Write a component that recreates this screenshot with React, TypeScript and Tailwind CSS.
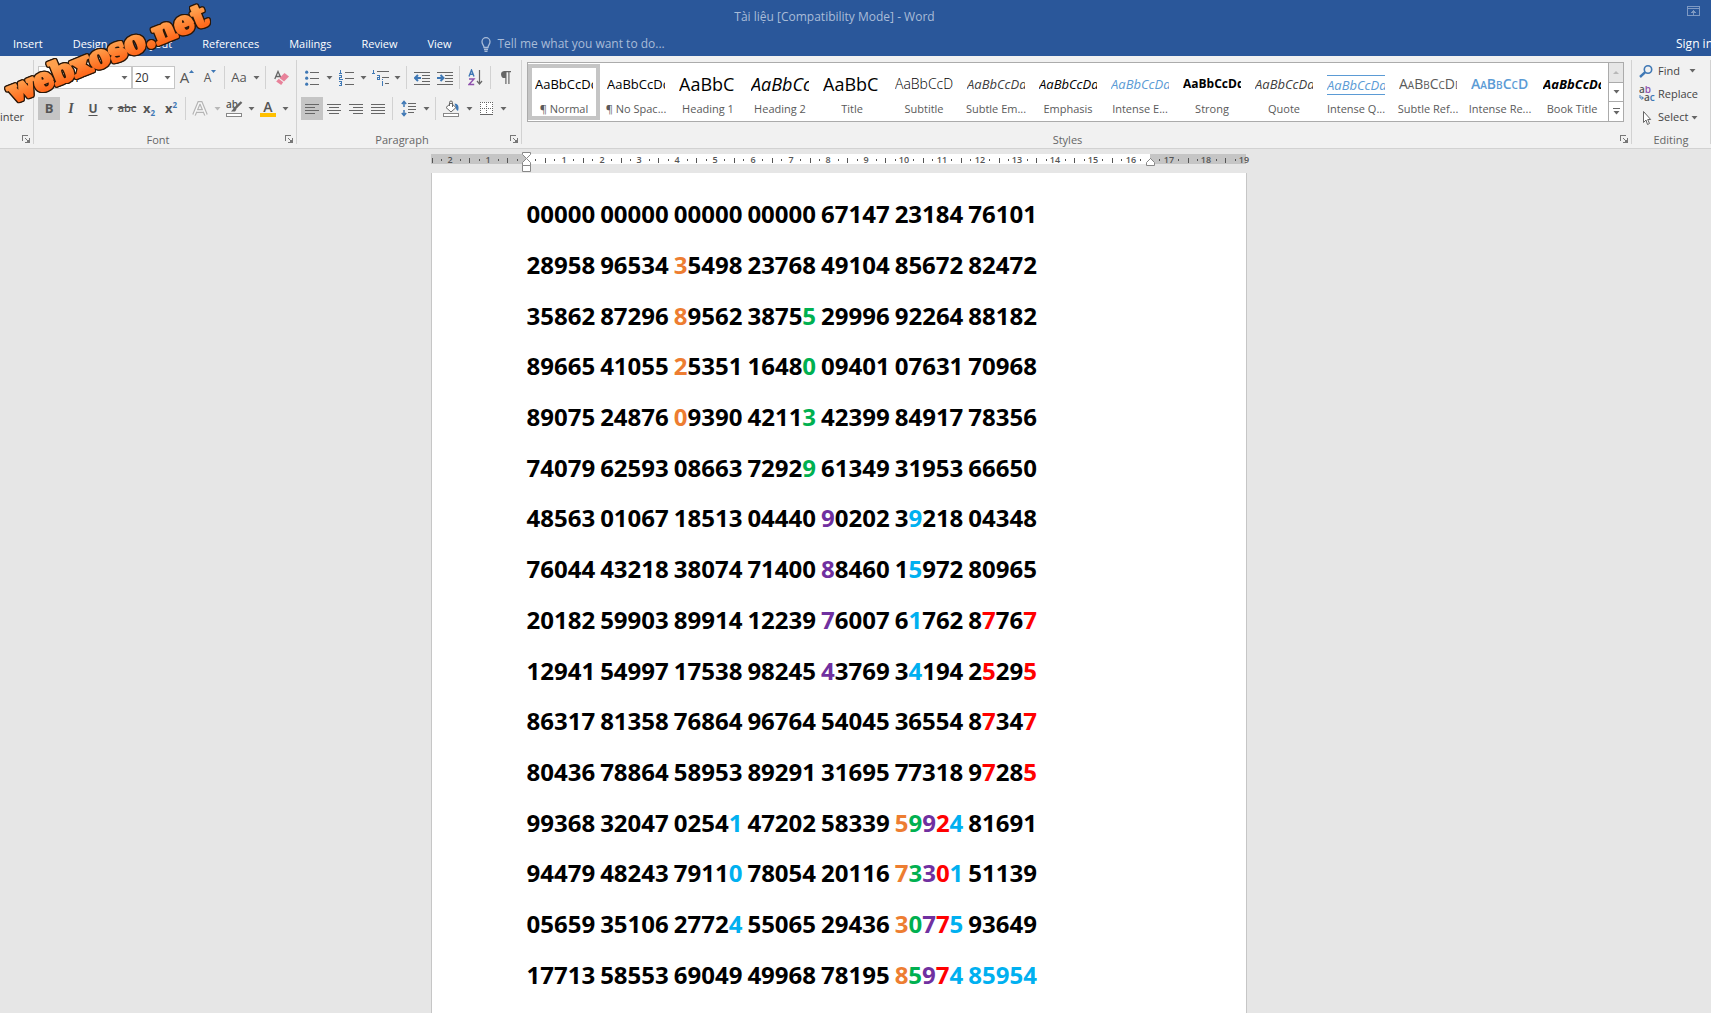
import type { ReactNode } from 'react';
import clsx from 'clsx';

const TABS = ['Insert', 'Design', 'Layout', 'References', 'Mailings', 'Review', 'View'];

interface StyleItem {
  name: string;
  sample: string;
  className: string;
}

const STYLES: StyleItem[] = [
  { name: '¶ Normal', sample: 'AaBbCcDd', className: 'text-[13px] text-black' },
  { name: '¶ No Spac...', sample: 'AaBbCcDd', className: 'text-[13px] text-black' },
  { name: 'Heading 1', sample: 'AaBbC', className: 'text-lg text-black' },
  { name: 'Heading 2', sample: 'AaBbCc', className: 'text-lg italic text-black' },
  { name: 'Title', sample: 'AaBbC', className: 'text-lg text-black' },
  { name: 'Subtitle', sample: 'AaBbCcD', className: 'text-sm font-light text-black' },
  { name: 'Subtle Em...', sample: 'AaBbCcDd', className: 'text-[13px] italic text-[#404040]' },
  { name: 'Emphasis', sample: 'AaBbCcDd', className: 'text-[13px] italic text-black' },
  { name: 'Intense E...', sample: 'AaBbCcDd', className: 'text-[13px] italic text-[#5b9bd5]' },
  { name: 'Strong', sample: 'AaBbCcDd', className: 'text-xs font-bold text-black' },
  { name: 'Quote', sample: 'AaBbCcDd', className: 'text-[13px] italic text-[#404040]' },
  {
    name: 'Intense Q...',
    sample: 'AaBbCcDd',
    className: 'text-[13px] italic text-[#5b9bd5] border-y border-[#5b9bd5]',
  },
  { name: 'Subtle Ref...', sample: 'AaBbCcDd', className: 'text-sm text-[#5a5a5a] [font-variant-caps:small-caps]' },
  {
    name: 'Intense Re...',
    sample: 'AaBbCcDd',
    className: 'text-sm font-semibold text-[#5b9bd5] [font-variant-caps:small-caps]',
  },
  { name: 'Book Title', sample: 'AaBbCcDd', className: 'text-[13px] font-bold italic text-black' },
];

/** Digit colours: k = black, o = orange, g = green, p = purple, b = blue, r = red */
const COLORS: Record<string, string> = {
  k: 'text-black',
  o: 'text-[#ed7d31]',
  g: 'text-[#00b050]',
  p: 'text-[#7030a0]',
  b: 'text-[#00b0f0]',
  r: 'text-[#ff0000]',
};

/** Each line of digits, with a colour mask per group where it is not all black */
const LINES: { text: string; marks?: Record<number, string> }[] = [
  { text: '00000 00000 00000 00000 67147 23184 76101' },
  { text: '28958 96534 35498 23768 49104 85672 82472', marks: { 2: 'okkkk' } },
  { text: '35862 87296 89562 38755 29996 92264 88182', marks: { 2: 'okkkk', 3: 'kkkkg' } },
  { text: '89665 41055 25351 16480 09401 07631 70968', marks: { 2: 'okkkk', 3: 'kkkkg' } },
  { text: '89075 24876 09390 42113 42399 84917 78356', marks: { 2: 'okkkk', 3: 'kkkkg' } },
  { text: '74079 62593 08663 72929 61349 31953 66650', marks: { 3: 'kkkkg' } },
  { text: '48563 01067 18513 04440 90202 39218 04348', marks: { 4: 'pkkkk', 5: 'kbkkk' } },
  { text: '76044 43218 38074 71400 88460 15972 80965', marks: { 4: 'pkkkk', 5: 'kbkkk' } },
  { text: '20182 59903 89914 12239 76007 61762 87767', marks: { 4: 'pkkkk', 5: 'kbkkk', 6: 'krkkr' } },
  { text: '12941 54997 17538 98245 43769 34194 25295', marks: { 4: 'pkkkk', 5: 'kbkkk', 6: 'krkkr' } },
  { text: '86317 81358 76864 96764 54045 36554 87347', marks: { 6: 'krkkr' } },
  { text: '80436 78864 58953 89291 31695 77318 97285', marks: { 6: 'krkkr' } },
  { text: '99368 32047 02541 47202 58339 59924 81691', marks: { 2: 'kkkkb', 5: 'ogprb' } },
  { text: '94479 48243 79110 78054 20116 73301 51139', marks: { 2: 'kkkkb', 5: 'ogprb' } },
  { text: '05659 35106 27724 55065 29436 30775 93649', marks: { 2: 'kkkkb', 5: 'ogprb' } },
  { text: '17713 58553 69049 49968 78195 85974 85954', marks: { 5: 'ogprb', 6: 'bbbbb' } },
];

function Caret({ light = false }: { light?: boolean }) {
  return (
    <svg width="7" height="4" viewBox="0 0 7 4" fill={light ? '#b8b8b8' : '#666666'} aria-hidden="true">
      <path d="M0.5 0h6L3.5 3.5z" />
    </svg>
  );
}

interface ToolProps {
  label: string;
  active?: boolean;
  wide?: boolean;
  children: ReactNode;
}

function Tool({ label, active = false, wide = false, children }: ToolProps) {
  return (
    <button
      type="button"
      aria-label={label}
      aria-pressed={active}
      className={clsx(
        'flex h-[23px] shrink-0 items-center justify-center text-[#555555]',
        wide ? 'w-6' : 'w-[22px]',
        active && 'bg-[#c5c5c5]'
      )}
    >
      {children}
    </button>
  );
}

function Drop({ label, light }: { label: string; light?: boolean }) {
  return (
    <button type="button" aria-label={label} className="flex h-[23px] w-3 shrink-0 items-center justify-center">
      <Caret light={light} />
    </button>
  );
}

function Sep() {
  return <span className="mx-[3px] h-[23px] w-px shrink-0 bg-[#d2d2d2]" />;
}

function Launcher({ label }: { label: string }) {
  return (
    <button type="button" aria-label={label} className="absolute right-[3px] bottom-px">
      <svg width="8" height="8" viewBox="0 0 8 8" fill="none" stroke="#777777" shapeRendering="crispEdges">
        <path d="M0.5 6V0.5H6M3 3l3 3" />
        <path d="M7.5 3v4.5H3M6.5 5v2M5 6.5h2" />
      </svg>
    </button>
  );
}

interface GroupProps {
  title?: string;
  className: string;
  launcher?: boolean;
  children: ReactNode;
}

function Group({ title, className, launcher = true, children }: GroupProps) {
  return (
    <section className={clsx('relative flex h-[84px] flex-col border-r border-[#d2d2d2]', className)}>
      {children}
      {title && (
        <h2
          className={clsx(
            '-mb-1 mt-auto text-center text-[11px] leading-4 text-[#666666]',
            launcher && 'pr-[18px]'
          )}
        >
          {title}
        </h2>
      )}
      {launcher && <Launcher label={`${title ?? 'Clipboard'} settings`} />}
    </section>
  );
}

/** Horizontal text lines, used by the alignment buttons */
function LinesIcon({ rows }: { rows: [number, number][] }) {
  return (
    <svg width="14" height="12" viewBox="0 0 14 12" stroke="#666666" shapeRendering="crispEdges">
      {rows.map(([from, to], i) => (
        <path key={i} d={`M${from} ${i * 3 + 1.5}H${to}`} />
      ))}
    </svg>
  );
}

function BulletsIcon() {
  return (
    <svg width="14" height="16" viewBox="0 0 14 16">
      <path d="M5 2.5h9M5 8.5h9M5 14.5h9" stroke="#666666" shapeRendering="crispEdges" />
      <g fill="#3f78b5">
        <circle cx="1.7" cy="2.2" r="1.6" />
        <circle cx="1.7" cy="8.2" r="1.6" />
        <circle cx="1.7" cy="14.2" r="1.6" />
      </g>
    </svg>
  );
}

function NumberingIcon() {
  return (
    <svg width="15" height="17" viewBox="0 0 15 17" fill="none" shapeRendering="crispEdges">
      <path d="M6 3h9M6 9h9M6 15h9" stroke="#666666" />
      <path
        d="M0.5 1.5h1v3M0 4.5h3M0 6.5h2.5v2h-2v2h3M0 12.5h2.5v4H0M0.5 14.5h2"
        stroke="#3f78b5"
      />
    </svg>
  );
}

function MultilevelIcon() {
  return (
    <svg width="17" height="17" viewBox="0 0 17 17" fill="none" shapeRendering="crispEdges">
      <path d="M5 2.5h12M10 8.5h7M13 14.5h4" stroke="#666666" />
      <path d="M0.5 1.5h1v3M0 4.5h3M5 6.5h2.5v4H5v-2h2M10.5 10v1M10.5 12.5v4M9.5 12.5h1" stroke="#3f78b5" />
    </svg>
  );
}

function IndentIcon({ increase = false }: { increase?: boolean }) {
  return (
    <svg width="16" height="14" viewBox="0 0 16 14" fill="none">
      <path d="M0 1.5h16M8 4.5h8M8 7.5h8M8 10.5h8M0 13.5h16" stroke="#666666" shapeRendering="crispEdges" />
      <path d={increase ? 'M0 7h6M3.5 4L6.5 7l-3 3' : 'M7 7H1M4 4L1 7l3 3'} stroke="#3f78b5" strokeWidth="2" />
    </svg>
  );
}

function SortIcon() {
  return (
    <svg width="15" height="17" viewBox="0 0 15 17" fill="none">
      <path d="M1 7.5L3.5 1 6 7.5M1.8 5.3h3.4" stroke="#3f78b5" strokeWidth="1.4" />
      <path d="M1 10h5L1 15.5h5.2" stroke="#8f52ad" strokeWidth="1.4" />
      <path d="M11.5 1v14M9 12l2.5 3 2.5-3" stroke="#666666" strokeWidth="1.2" />
    </svg>
  );
}

function LineSpacingIcon() {
  return (
    <svg width="15" height="17" viewBox="0 0 15 17" fill="none">
      <path d="M7 3.5h8M7 6.5h8M7 9.5h8M7 12.5h6" stroke="#666666" shapeRendering="crispEdges" />
      <path d="M3 2v5M0.8 4L3 1.5 5.2 4M3 10v5M0.8 13L3 15.5 5.2 13" stroke="#3f78b5" strokeWidth="1.5" />
    </svg>
  );
}

function ShadingIcon() {
  return (
    <svg width="17" height="17" viewBox="0 0 17 17" fill="none">
      <path d="M3 7.5L8 3l5 4.5-5 4.5z" fill="#ffffff" stroke="#666666" />
      <path d="M6.5 6V2.5a1.5 1.5 0 0 1 3 0V7" stroke="#666666" />
      <path d="M11.5 3.5c3.5 0 5 3 3.5 7.5-1.5-1-2-1.5-2-3.5z" fill="#3f78b5" />
      <rect x="0.5" y="13.5" width="15" height="3" fill="#ffffff" stroke="#888888" />
    </svg>
  );
}

function BordersIcon() {
  return (
    <svg width="13" height="13" viewBox="0 0 13 13" stroke="#666666" shapeRendering="crispEdges">
      <rect width="13" height="13" fill="#ffffff" stroke="none" />
      <path d="M0 0.5h13M0 6.5h13M0.5 0v12M6.5 0v12M12.5 0v12" strokeDasharray="1 1" />
      <path d="M0 12.5h13" />
    </svg>
  );
}

function ClearFormatIcon() {
  return (
    <svg width="15" height="16" viewBox="0 0 15 16" fill="none">
      <path d="M0.8 9L4 1.5 7 8M2 6.5h4" stroke="#666666" strokeWidth="1.3" />
      <path d="M10.5 3l4.5 3.5-5 5-4.5-3.5z" fill="#e8829a" />
      <path d="M4.7 8.8l4.5 3.5-2 2.7-5-3.5z" fill="#e8829a" />
    </svg>
  );
}

function HighlightIcon() {
  return (
    <svg width="17" height="17" viewBox="0 0 17 17" fill="none">
      <text x="0" y="8" fontSize="10" fontWeight="600" fill="#555555" className="font-['Open_Sans',sans-serif]">
        ab
      </text>
      <path d="M15.5 2L8 9.5" stroke="#666666" strokeWidth="2.4" />
      <path d="M8.5 7.5L5 11.5h4l1.5-2z" fill="#666666" />
      <rect x="0.5" y="13.5" width="15" height="3" fill="#ffffff" stroke="#888888" />
    </svg>
  );
}

function FontTools() {
  return (
    <>
      <div className="mt-[6px] flex items-center">
        <label className="relative block h-[23px] w-[94px]">
          <select aria-label="Font" className="block h-full w-full appearance-none border border-[#c6c6c6] bg-white px-1 text-xs">
            <option>Calibri</option>
          </select>
          <span className="pointer-events-none absolute top-[10px] right-1">
            <Caret />
          </span>
        </label>
        <label className="relative block h-[23px] w-[43px]">
          <select aria-label="Font size" className="block h-full w-full appearance-none border border-[#c6c6c6] bg-white px-[2px] text-xs text-[#333333]">
            <option>20</option>
          </select>
          <span className="pointer-events-none absolute top-[10px] right-1">
            <Caret />
          </span>
        </label>
        <Tool label="Increase font size" wide>
          <span className="text-[15px]">A</span>
          <svg width="5" height="3" viewBox="0 0 5 3" className="mb-3" fill="#3f78b5">
            <path d="M2.5 0L5 3H0z" />
          </svg>
        </Tool>
        <Tool label="Decrease font size">
          <span className="text-xs">A</span>
          <svg width="5" height="3" viewBox="0 0 5 3" className="mb-3" fill="#3f78b5">
            <path d="M2.5 3L5 0H0z" />
          </svg>
        </Tool>
        <Sep />
        <Tool label="Change case">
          <span className="text-[13px]">Aa</span>
        </Tool>
        <Drop label="Change case options" />
        <Sep />
        <Tool label="Clear formatting" wide>
          <ClearFormatIcon />
        </Tool>
      </div>
      <div className="mt-2 flex items-center">
        <Tool label="Bold" active>
          <b className="text-[13px]">B</b>
        </Tool>
        <Tool label="Italic">
          <i className="font-['Liberation_Serif',serif] text-sm font-bold">I</i>
        </Tool>
        <Tool label="Underline">
          <span className="text-xs font-bold underline underline-offset-2">U</span>
        </Tool>
        <Drop label="Underline options" />
        <Tool label="Strikethrough">
          <s className="text-[11px] font-semibold">abc</s>
        </Tool>
        <Tool label="Subscript">
          <b className="text-[13px]">x</b>
          <span className="mt-2 text-[8px] font-bold text-[#3f78b5]">2</span>
        </Tool>
        <Tool label="Superscript">
          <b className="text-[13px]">x</b>
          <span className="mb-2 text-[8px] font-bold text-[#3f78b5]">2</span>
        </Tool>
        <Sep />
        <Tool label="Text effects">
          <svg width="16" height="16" viewBox="0 0 16 16" fill="none">
            <path d="M2 14L7 2h2l5 12M4.5 10h7" stroke="#b4b4b4" strokeWidth="3.8" />
            <path d="M2 14L7 2h2l5 12M4.5 10h7" stroke="#f7f7f7" strokeWidth="1.5" />
          </svg>
        </Tool>
        <Drop label="Text effects options" light />
        <Tool label="Text highlight color">
          <HighlightIcon />
        </Tool>
        <Drop label="Highlight options" />
        <Tool label="Font color">
          <span className="flex w-4 flex-col items-center border-b-4 border-[#ffc000] text-sm leading-[13px] font-semibold">A</span>
        </Tool>
        <Drop label="Font color options" />
      </div>
    </>
  );
}

function ParagraphTools() {
  return (
    <>
      <div className="mt-[6px] flex items-center">
        <Tool label="Bullets">
          <BulletsIcon />
        </Tool>
        <Drop label="Bullet options" />
        <Tool label="Numbering">
          <NumberingIcon />
        </Tool>
        <Drop label="Numbering options" />
        <Tool label="Multilevel list">
          <MultilevelIcon />
        </Tool>
        <Drop label="Multilevel options" />
        <Sep />
        <Tool label="Decrease indent" wide>
          <IndentIcon />
        </Tool>
        <Tool label="Increase indent">
          <IndentIcon increase />
        </Tool>
        <Sep />
        <Tool label="Sort" wide>
          <SortIcon />
        </Tool>
        <Sep />
        <Tool label="Show marks">
          <svg width="11" height="13" viewBox="0 0 11 13" fill="#666666">
            <path d="M4 0h7v1.2H9.5V13H8.3V1.2H6.5V13H5.3V7A3.5 3.5 0 0 1 4 0z" />
          </svg>
        </Tool>
      </div>
      <div className="mt-2 flex items-center">
        <Tool label="Align left" active>
          <LinesIcon rows={[[0, 14], [0, 10], [0, 14], [0, 10]]} />
        </Tool>
        <Tool label="Center">
          <LinesIcon rows={[[0, 14], [2, 12], [0, 14], [2, 12]]} />
        </Tool>
        <Tool label="Align right">
          <LinesIcon rows={[[0, 14], [4, 14], [0, 14], [4, 14]]} />
        </Tool>
        <Tool label="Justify">
          <LinesIcon rows={[[0, 14], [0, 14], [0, 14], [0, 14]]} />
        </Tool>
        <Sep />
        <Tool label="Line spacing" wide>
          <LineSpacingIcon />
        </Tool>
        <Drop label="Line spacing options" />
        <Sep />
        <Tool label="Shading" wide>
          <ShadingIcon />
        </Tool>
        <Drop label="Shading options" />
        <Tool label="Borders">
          <BordersIcon />
        </Tool>
        <Drop label="Border options" />
      </div>
    </>
  );
}

function StyleGallery() {
  return (
    <div className="mt-[2px] ml-[5px] mr-[7px] flex h-[60px] border border-[#ababab] bg-white">
      <ul className="flex min-w-0 flex-1">
        {STYLES.map((style, i) => (
          <li key={style.name} className="min-w-0 flex-1">
            <button
              type="button"
              aria-label={style.name}
              className={clsx(
                'mt-px flex h-[56px] w-full flex-col items-center border-4',
                i === 0 ? 'border-[#c5c5c5]' : 'border-transparent'
              )}
            >
              <span className="flex h-[33px] w-[58px] shrink-0 items-center overflow-hidden">
                <span className={clsx('h-5 w-full shrink-0 leading-[18px] text-left whitespace-nowrap', style.className)}>
                  {style.sample}
                </span>
              </span>
              <span className="text-[11px] leading-4 whitespace-nowrap text-[#5a5a5a]">{style.name}</span>
            </button>
          </li>
        ))}
      </ul>
      <div className="flex w-[15px] flex-col divide-y divide-[#ababab] border-l border-[#ababab]">
        <button type="button" aria-label="Scroll up" className="flex flex-1 items-center justify-center bg-[#e6e6e6]">
          <svg width="6" height="3" viewBox="0 0 6 3" fill="#b8b8b8">
            <path d="M0 3h6L3 0z" />
          </svg>
        </button>
        <button type="button" aria-label="Scroll down" className="flex flex-1 items-center justify-center">
          <Caret />
        </button>
        <button type="button" aria-label="More styles" className="flex flex-1 flex-col items-center justify-center gap-[2px]">
          <span className="h-px w-[7px] bg-[#666666]" />
          <Caret />
        </button>
      </div>
    </div>
  );
}

function EditingTools() {
  return (
    <div className="flex flex-col pl-[7px] text-[11px] text-[#444444]">
      <button type="button" className="flex h-[22px] items-center gap-[5px]">
        <svg width="14" height="13" viewBox="0 0 14 13" fill="none" stroke="#3f78b5">
          <circle cx="9" cy="4.5" r="3.7" strokeWidth="1.6" />
          <path d="M6.2 7.2L1 12" strokeWidth="2.4" />
        </svg>
        Find
        <span className="ml-1">
          <Caret />
        </span>
      </button>
      <button type="button" className="flex h-6 items-center gap-[3px]">
        <svg width="16" height="16" viewBox="0 0 16 16" className="font-['Open_Sans',sans-serif]" fontSize="10" fontWeight="600">
          <text x="0" y="7" fill="#555555">
            a<tspan fill="#8f52ad">b</tspan>
          </text>
          <text x="5" y="15" fill="#555555">
            a<tspan fill="#3f78b5">c</tspan>
          </text>
          <path d="M1 9v3h3M2.5 10.5L4.500 12l-2 1.5" fill="none" stroke="#3f78b5" />
        </svg>
        Replace
      </button>
      <button type="button" className="flex h-[23px] items-center gap-[5px]">
        <svg width="14" height="16" viewBox="0 0 14 16" fill="#ffffff" stroke="#666666">
          <path d="M4.5 1.5v11l2.5-2.5 1.5 4.5 2-1-1.8-4h3z" />
        </svg>
        <span className="flex items-center gap-[3px]">
          Select
          <Caret />
        </span>
      </button>
    </div>
  );
}

/** Distance between two whole numbers of the ruler, in pixels */
const UNIT = 37.8;
const ORIGIN = 95;

function Ruler() {
  const quarters = Array.from({ length: 87 }, (_, i) => i - 10);
  return (
    <svg
      width="824"
      height="21"
      viewBox="0 0 824 21"
      className="shrink-0 font-['Open_Sans',sans-serif]"
      role="img"
      aria-label="Ruler"
    >
      <rect x="0" y="2" width="815" height="10" fill="#c5c5c5" />
      <rect x="96" y="2" width="623" height="10" fill="#ffffff" />
      {quarters.map((q) => {
        const x = Math.round(ORIGIN + (q * UNIT) / 4);
        if (q === 0) return null;
        if (q % 4 === 0) {
          return (
            <text key={q} x={x} y="11" fontSize="9" fontWeight="600" fill="#555555" textAnchor="middle">
              {Math.abs(q / 4)}
            </text>
          );
        }
        return q % 2 === 0 ? (
          <rect key={q} x={x} y="6" width="1" height="5" fill="#555555" />
        ) : (
          <rect key={q} x={x} y="7" width="1" height="2" fill="#555555" />
        );
      })}
      <g fill="#ffffff" stroke="#888888">
        <path d="M91.5 0.5h8v2l-4 4-4-4z" />
        <path d="M95.5 6.5l4 4v3h-8v-3zM91.5 13.5h8v6h-8z" />
        <path d="M719.5 6.5l4 4v3h-8v-3z" />
      </g>
    </svg>
  );
}

function DigitLine({ text, marks = {} }: { text: string; marks?: Record<number, string> }) {
  return (
    <p className="flex flex-1 items-center gap-[5px]">
      {text.split(' ').map((group, g) => (
        <span key={g}>
          {marks[g]
            ? group.split('').map((digit, d) => (
                <span key={d} className={COLORS[marks[g][d]]}>
                  {digit}
                </span>
              ))
            : group}
        </span>
      ))}
    </p>
  );
}

function Watermark() {
  return (
    <svg
      width="220"
      height="116"
      viewBox="0 0 220 116"
      className="pointer-events-none absolute top-0 left-0 font-['DejaVu_Serif',serif] [filter:drop-shadow(1px_0_#2a1708)_drop-shadow(-1px_0_#2a1708)_drop-shadow(0_1px_#2a1708)_drop-shadow(0_-1px_#2a1708)]"
      role="img"
      aria-label="webxoso.net"
    >
      <defs>
        <linearGradient id="orange" x1="0" y1="0" x2="0" y2="1">
          <stop offset="0.3" stopColor="#ffa04d" />
          <stop offset="0.8" stopColor="#ff6a1c" />
        </linearGradient>
      </defs>
      <text
        x="13"
        y="103"
        transform="rotate(-22 13 103)"
        fontSize="31"
        fontWeight="bold"
        fill="url(#orange)"
        stroke="url(#orange)"
        strokeWidth="3"
        strokeLinejoin="round"
      >
        webxoso.net
      </text>
    </svg>
  );
}

export default function App() {
  return (
    <div className="relative flex min-h-screen flex-col overflow-hidden bg-[#e6e6e6] font-['Open_Sans','Noto_Sans',sans-serif]">
      <header className="bg-[#2a579a] text-xs text-white">
        <div className="relative flex h-8 items-center justify-center pt-px pr-[42px] text-[#a9bcd8]">
          <h1>Tài liệu [Compatibility Mode] - Word</h1>
          <button type="button" aria-label="Ribbon display options" className="absolute top-[6px] right-[11px]">
            <svg width="13" height="10" viewBox="0 0 13 10" fill="none" stroke="#7f9ac3" shapeRendering="crispEdges">
              <path d="M0.5 0.5h12v9H0.5zM0 2.5h13M6.5 9V4M4 6.5h5M5 5.5h3" />
            </svg>
          </button>
        </div>
        <nav className="flex h-6 items-center">
          <div className="flex gap-[30px] pl-[13px] text-[11px]">
            {TABS.map((tab) => (
              <a key={tab} href="#">
                {tab}
              </a>
            ))}
          </div>
          <label className="ml-[30px] flex flex-1 items-center gap-[6px] text-[#a9bcd8]">
            <svg width="10" height="15" viewBox="0 0 10 15" fill="none" stroke="#a9bcd8" strokeWidth="1.3">
              <path d="M3 10.5C3 8 1 7.5 1 4.7a4 4 0 0 1 8 0C9 7.5 7 8 7 10.5zM3 12.5h4M3.5 14.3h3" />
            </svg>
            <input
              type="text"
              aria-label="Tell me what you want to do"
              placeholder="Tell me what you want to do..."
              className="w-60 bg-transparent placeholder:text-[#a9bcd8]"
            />
          </label>
          <a href="#" className="w-[35px] overflow-hidden whitespace-nowrap">
            Sign in
          </a>
        </nav>
      </header>

      <div className="flex h-[93px] border-b border-[#d2d2d2] bg-[#f1f1f1] pt-1">
        <Group className="w-[34px]">
          <button type="button" className="mt-[48px] self-start text-[11px] leading-[18px] text-[#444444]">
            inter
          </button>
        </Group>
        <Group title="Font" className="w-[263px] pl-1">
          <FontTools />
        </Group>
        <Group title="Paragraph" className="w-[225px] pl-1">
          <ParagraphTools />
        </Group>
        <Group title="Styles" className="min-w-0 flex-1">
          <StyleGallery />
        </Group>
        <Group title="Editing" className="w-[79px]" launcher={false}>
          <EditingTools />
        </Group>
      </div>

      <main className="flex flex-1 flex-col items-center pr-[34px]">
        <div className="mt-[3px] flex w-[816px]">
          <Ruler />
        </div>
        <article className="flex w-[816px] flex-1 flex-col border-x border-[#c6c6c6] bg-white pt-4 pr-24 pb-[13px] pl-[95px] text-2xl font-bold text-black">
          {LINES.map((line) => (
            <DigitLine key={line.text} {...line} />
          ))}
        </article>
      </main>

      <Watermark />
    </div>
  );
}
